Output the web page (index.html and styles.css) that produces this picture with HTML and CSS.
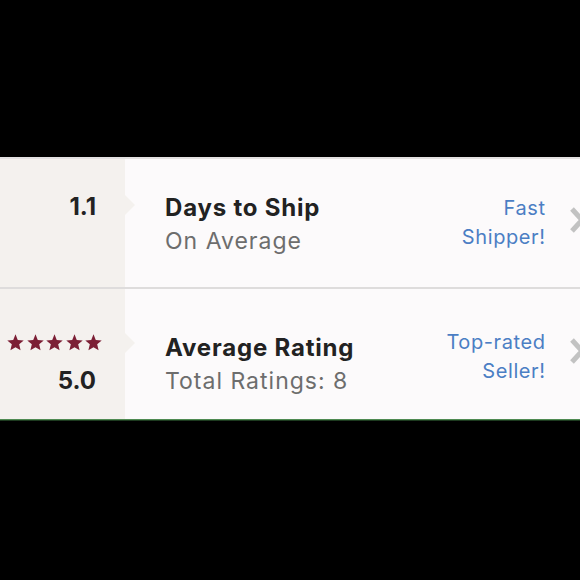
FILE: index.html
```html
<!DOCTYPE html>
<html>
<head>
<meta charset="utf-8">
<link rel="stylesheet" href="styles.css">
</head>
<body>
<div class="screen">
  <div class="panel">
    <div class="row row-ship">
      <div class="num-cell">
        <div class="num">1.1</div>
      </div>
      <div class="info">
        <div class="title">Days to Ship</div>
        <div class="sub">On Average</div>
      </div>
      <div class="badge">Fast<br>Shipper!</div>
      <div class="chev">
        <svg width="18" height="26" viewBox="0 0 18 26"><polyline points="2,2 12,13 2,24" fill="none" stroke="#c2c2c2" stroke-width="5"/></svg>
      </div>
    </div>
    <div class="divider"></div>
    <div class="row row-rating">
      <div class="num-cell">
        <div class="stars">
          <svg width="17" height="17" viewBox="0 0 24 24"><polygon points="12,0.5 15.2,8.3 23.6,9 17.2,14.6 19.2,23 12,18.6 4.8,23 6.8,14.6 0.4,9 8.8,8.3" fill="#7c1f35"/></svg>
          <svg width="17" height="17" viewBox="0 0 24 24"><polygon points="12,0.5 15.2,8.3 23.6,9 17.2,14.6 19.2,23 12,18.6 4.8,23 6.8,14.6 0.4,9 8.8,8.3" fill="#7c1f35"/></svg>
          <svg width="17" height="17" viewBox="0 0 24 24"><polygon points="12,0.5 15.2,8.3 23.6,9 17.2,14.6 19.2,23 12,18.6 4.8,23 6.8,14.6 0.4,9 8.8,8.3" fill="#7c1f35"/></svg>
          <svg width="17" height="17" viewBox="0 0 24 24"><polygon points="12,0.5 15.2,8.3 23.6,9 17.2,14.6 19.2,23 12,18.6 4.8,23 6.8,14.6 0.4,9 8.8,8.3" fill="#7c1f35"/></svg>
          <svg width="17" height="17" viewBox="0 0 24 24"><polygon points="12,0.5 15.2,8.3 23.6,9 17.2,14.6 19.2,23 12,18.6 4.8,23 6.8,14.6 0.4,9 8.8,8.3" fill="#7c1f35"/></svg>
        </div>
        <div class="num">5.0</div>
      </div>
      <div class="info">
        <div class="title">Average Rating</div>
        <div class="sub">Total Ratings: 8</div>
      </div>
      <div class="badge">Top-rated<br>Seller!</div>
      <div class="chev">
        <svg width="18" height="26" viewBox="0 0 18 26"><polyline points="2,2 12,13 2,24" fill="none" stroke="#c2c2c2" stroke-width="5"/></svg>
      </div>
    </div>
    <div class="bottom-line"></div>
  </div>
</div>
</body>
</html>
```

FILE: styles.css
```css
html, body {
  margin: 0;
  padding: 0;
  background: #000;
}
.screen {
  width: 580px;
  height: 580px;
  background: #000;
  padding-top: 157px;
  box-sizing: border-box;
  overflow: hidden;
  font-family: Inter, Lato, sans-serif;
}
.panel {
  width: 580px;
  border-top: 2px solid #e3e1e1;
  background: #fcfafb;
  overflow: hidden;
}
.row {
  display: flex;
  align-items: flex-start;
}
.row-ship {
  height: 128px;
}
.row-rating {
  height: 130px;
}
.divider {
  height: 2px;
  background: #dedcdc;
}
.bottom-line {
  height: 1px;
  background: #4f8a52;
  border-bottom: 1px solid #1d3a1f;
}
.num-cell {
  position: relative;
  width: 125px;
  height: 100%;
  flex: none;
  box-sizing: border-box;
  background: #f4f1ee;
  padding-right: 29px;
  text-align: right;
}
.num-cell::after {
  content: "";
  position: absolute;
  right: -10px;
  border-left: 10px solid #f4f1ee;
  border-top: 10px solid transparent;
  border-bottom: 10px solid transparent;
}
.row-ship .num-cell { padding-top: 33px; }
.row-ship .num-cell::after { top: 36px; }
.row-rating .num-cell { padding-top: 45px; padding-right: 23px; }
.row-rating .num-cell::after { top: 44px; }
.num {
  font-size: 24px;
  line-height: 30px;
  font-weight: 700;
  color: #222;
}
.row-rating .num { padding-right: 6px; }
.stars {
  display: flex;
  justify-content: flex-end;
  gap: 2.5px;
  height: 17px;
  margin-bottom: 15px;
}
.stars svg { display: block; }
.info {
  flex: 1;
  padding-left: 40px;
}
.row-ship .info { padding-top: 34px; }
.row-rating .info { padding-top: 44px; }
.title {
  font-size: 24px;
  line-height: 30px;
  font-weight: 700;
  letter-spacing: 0.8px;
  color: #222;
}
.sub {
  margin-top: 3px;
  font-size: 23px;
  line-height: 30px;
  letter-spacing: 1px;
  color: #6d6d6d;
}
.badge {
  text-align: right;
  font-size: 20px;
  line-height: 29px;
  letter-spacing: 0.6px;
  margin-right: -0.6px;
  color: #4b7ec4;
}
.row-ship .badge { padding-top: 35px; }
.row-rating .badge { padding-top: 39px; }
.chev {
  width: 35px;
  flex: none;
  padding-left: 25px;
  box-sizing: border-box;
}
.chev svg { display: block; overflow: visible; }
.row-ship .chev { padding-top: 48px; }
.row-rating .chev { padding-top: 49px; }
```
